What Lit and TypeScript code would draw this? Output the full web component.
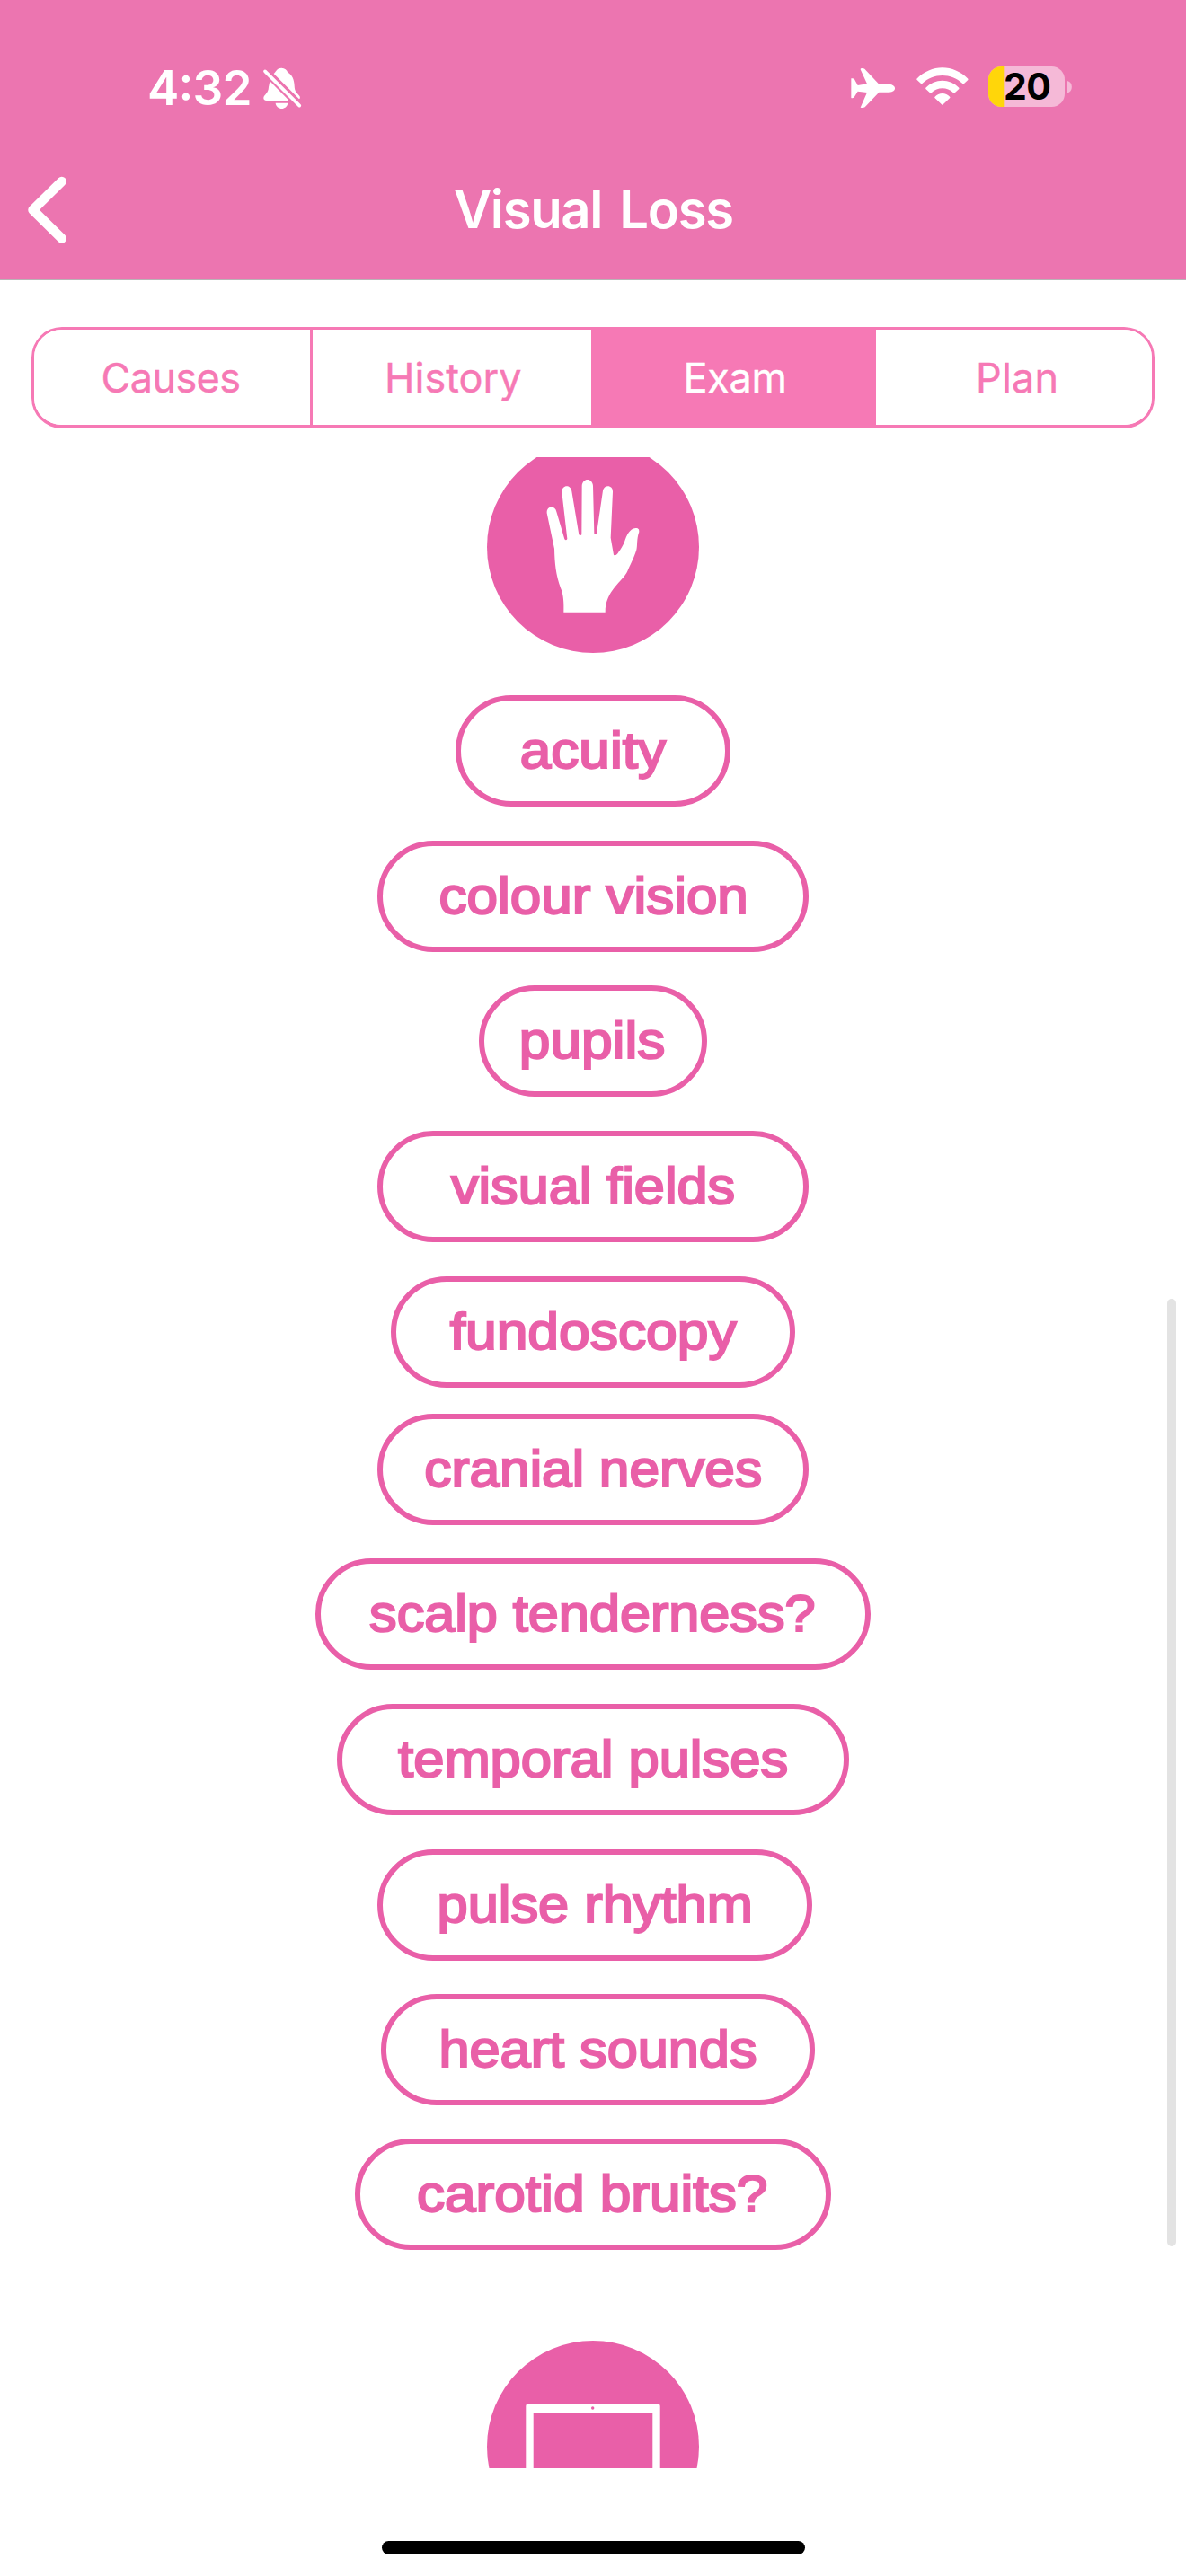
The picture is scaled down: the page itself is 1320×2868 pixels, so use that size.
import { LitElement, html, css, svg } from "lit";
import { customElement, property, state } from "lit/decorators.js";
import { classMap } from "lit/directives/class-map.js";
import { styleMap } from "lit/directives/style-map.js";

interface ExamItem {
  label: string;
  width: number;
  gap: number;
  textX: number;
  textWidth: number;
  shift?: number;
}

const EXAM_ITEMS: ExamItem[] = [
  { label: "acuity", width: 306, gap: 47, textX: 71.8, textWidth: 162.2 },
  { label: "colour vision", width: 480, gap: 38, textX: 68.6, textWidth: 344.2 },
  { label: "pupils", width: 254, gap: 37, textX: 44.8, textWidth: 162.6 },
  { label: "visual fields", width: 480, gap: 38, textX: 81.9, textWidth: 316.2 },
  { label: "fundoscopy", width: 450, gap: 38, textX: 65.7, textWidth: 318.9 },
  { label: "cranial nerves", width: 480, gap: 29, textX: 52.2, textWidth: 375.9 },
  { label: "scalp tenderness?", width: 618, gap: 37, textX: 60.1, textWidth: 496.4 },
  { label: "temporal pulses", width: 570, gap: 38, textX: 68.1, textWidth: 434.1, shift: -1 },
  { label: "pulse rhythm", width: 484, gap: 38, textX: 66.5, textWidth: 351.3, shift: 4 },
  { label: "heart sounds", width: 483, gap: 37, textX: 64.5, textWidth: 354, shift: 11 },
  { label: "carotid bruits?", width: 530, gap: 37, textX: 68.9, textWidth: 390.4 },
];

const TABS = [
  { label: "Causes", width: 307, x: 75, textWidth: 155.5 },
  { label: "History", width: 310, x: 80.5, textWidth: 152.5 },
  { label: "Exam", width: 317, x: 103, textWidth: 115.5 },
  { label: "Plan", width: 307, x: 111.5, textWidth: 92 },
];

@customElement("exam-pill")
export class ExamPill extends LitElement {
  @property({ attribute: false }) item!: ExamItem;

  static styles = css`
    :host {
      display: block;
    }
    .pill {
      box-sizing: border-box;
      height: 124px;
      border: 6px solid #e95fa8;
      border-radius: 62px;
      background: #fff;
    }
    .label {
      display: block;
      overflow: visible;
      font: 57px "Liberation Sans", Arial, sans-serif;
      text-rendering: geometricPrecision;
      fill: #e95fa8;
      stroke: #e95fa8;
      stroke-width: 2.2px;
    }
  `;

  render() {
    const { label, width, textX, textWidth } = this.item;
    return html`
      <div class="pill" style=${styleMap({ width: `${width}px` })}>
        <svg class="label" width=${width - 12} height="112">
          <text x=${textX - 6} y="75" textLength=${textWidth} lengthAdjust="spacingAndGlyphs">${label}</text>
        </svg>
      </div>
    `;
  }
}

@customElement("app-root")
export class AppRoot extends LitElement {
  @state() private active = "Exam";

  static styles = css`
    :host {
      display: flex;
      flex-direction: column;
      width: 1320px;
      height: 2868px;
      overflow: hidden;
      position: relative;
      background: #fff;
      font-family: Inter, "Liberation Sans", sans-serif;
    }
    svg {
      display: block;
      overflow: visible;
      flex: none;
    }
    .header {
      box-sizing: border-box;
      height: 312px;
      flex: none;
      background: #ec75b0;
      border-bottom: 1px solid #b9b3b6;
      color: #fff;
    }
    .status {
      box-sizing: border-box;
      display: flex;
      align-items: flex-start;
      height: 156px;
      padding: 73px 127px 0 164px;
    }
    .time {
      fill: #fff;
      font-size: 53px;
      font-weight: 600;
    }
    .bell {
      margin: 2px 0 0 13px;
    }
    .plane {
      margin: 3px 0 0 auto;
    }
    .wifi {
      margin: 2px 0 0 24px;
    }
    .battery {
      margin: 1px 0 0 22px;
    }
    .level {
      font-size: 41px;
      font-weight: 700;
      fill: #000;
    }
    .nav {
      display: grid;
      grid-template-columns: 504px 312px 1fr;
      height: 155px;
    }
    .back {
      padding: 0;
      border: 0;
      background: none;
      display: flex;
    }
    .title {
      fill: #fff;
      font-size: 58px;
      font-weight: 600;
      word-spacing: 6px;
    }
    .tabs {
      box-sizing: border-box;
      display: flex;
      flex: none;
      width: 1250px;
      height: 113px;
      margin: 52px 35px 32px;
      border: 3px solid #f679b5;
      border-bottom-width: 4px;
      border-radius: 34px;
      overflow: hidden;
    }
    .tab {
      box-sizing: border-box;
      flex: none;
      padding: 0;
      border: 0;
      background: #fff;
      fill: #f679b5;
      stroke: #f679b5;
      stroke-width: 0.4px;
      font: 400 45px Inter, "Liberation Sans", sans-serif;
    }
    .tab.divided {
      border-right: 3px solid #f679b5;
    }
    .tab.active {
      background: #f679b5;
      fill: #fff;
      stroke: #fff;
    }
    .viewport {
      flex: none;
      height: 2239px;
      overflow: hidden;
    }
    .list {
      display: flex;
      flex-direction: column;
      align-items: center;
      margin-top: -18px;
    }
    .next {
      margin-top: 101px;
    }
    .scrollbar {
      position: absolute;
      left: 1299px;
      top: 1446px;
      width: 10px;
      height: 1055px;
      border-radius: 5px;
      background: #e3e3e3;
    }
    .home {
      flex: none;
      width: 471px;
      height: 15px;
      margin: 81px 0 0 425px;
      border-radius: 8px;
      background: #000;
    }
  `;

  private renderStatus() {
    return html`
      <div class="status">
        <svg class="time" width="116" height="50">
          <text x="0" y="44" textLength="116.5">4:32</text>
        </svg>
        <svg class="bell" width="42.3" height="46.3" viewBox="878 104 127 139" fill="#fff">
          <path d="M913 125C921 119 922 107 939 106C950 106 957 113 960 121C975 129 981 145 982 165C983 188 990 187 1000 201Q1003 208 998 210Z" />
          <path d="M900 150L962 213Q962 215 959 215H889Q878 214 879 205C882 193 895 192 896 170Z" />
          <path d="M919 223H960C957 248 922 248 919 223Z" />
          <path d="M884 117L999 232" stroke="#fff" stroke-width="11" stroke-linecap="round" />
        </svg>
        <svg class="plane" width="49.3" height="44" viewBox="140 108 148 132" fill="#fff">
          <path d="M173 109Q180 107 186 110L234 161H268C294 163 294 187 268 188H234L187 238Q180 242 172 239L194 189L163 185L151 205Q146 209 141 207V142Q148 140 152 145L163 165L194 160L172 112Z" />
        </svg>
        <svg class="wifi" width="57.7" height="42" viewBox="359 105 173 126" fill="#fff">
          <path d="M360 143C408 93 483 93 531 143Q532 145 531 147L518 159Q515 161 513 159C475 123 416 123 378 159Q376 161 374 159L361 147Q359 145 360 143Z" />
          <path d="M390 173C420 141 471 141 501 173Q502 175 501 177L487 190Q485 192 482 190C462 170 429 170 409 190Q406 192 404 190L390 177Q389 175 390 173Z" />
          <path d="M420 204C434 188 457 188 471 204Q472 206 470 208L448 229Q445.5 232 443 229L421 208Q419 206 420 204Z" />
        </svg>
        <svg class="battery" width="93" height="45" viewBox="0 0 93 45">
          <defs>
            <clipPath id="body"><rect width="85" height="45" rx="14.5" /></clipPath>
          </defs>
          <g clip-path="url(#body)">
            <rect width="85" height="45" fill="#f5b9d7" />
            <rect width="17.3" height="45" fill="#ffd60a" />
          </g>
          <path d="M88 16C94.500 17.500 94.500 28 88 29.500Z" fill="#f5b9d7" />
          <text class="level" x="17" y="37.200" textLength="53">20</text>
        </svg>
      </div>
    `;
  }

  private renderTab(tab: (typeof TABS)[number], index: number) {
    return html`
      <button
        class=${classMap({ tab: true, divided: index === 0, active: tab.label === this.active })}
        style=${styleMap({ width: `${tab.width + (index === 0 ? 3 : 0)}px` })}
        @click=${() => (this.active = tab.label)}
      >
        <svg width=${tab.width} height="106">
          <text x=${tab.x - 0.5} y="70" textLength=${tab.textWidth}>${tab.label}</text>
        </svg>
      </button>
    `;
  }

  private handIcon = svg`
    <path fill="#fff" d="M381 574C382 545 381 515 371 493C355 450 351 410 350 362L325 243C323 218 352 216 357 238L384 330Q389 336 393 329L375 173C375 147 405 147 408 170L432 315Q437 320 441 315L442 152C444 124 477 124 479 152L483 311Q487 316 491 311L512 168C515 147 546 147 545 172L538 325L548 382Q554 387 562 377C572 362 580 352 586 333C597 302 612 290 628 294Q634 296 633 305C624 330 628 350 624 366C616 392 602 418 594 437C580 470 520 500 520 574Z" />
  `;

  render() {
    return html`
      <header class="header">
        ${this.renderStatus()}
        <div class="nav">
          <button class="back" aria-label="Back">
            <svg width="110" height="155" fill="none" stroke="#fff" stroke-width="10.5" stroke-linecap="round" stroke-linejoin="round">
              <path d="M68.700 46L36.500 77.700L68.700 109.500" />
            </svg>
          </button>
          <svg class="title" width="312" height="155">
            <text x="1" y="98" textLength="312">Visual Loss</text>
          </svg>
        </div>
      </header>
      <nav class="tabs">${TABS.map((tab, i) => this.renderTab(tab, i))}</nav>
      <main class="viewport">
        <div class="list">
          <svg width="236" height="236" viewBox="125 2 708 708">
            <circle cx="479" cy="356" r="354" fill="#e95fa8" />
            ${this.handIcon}
          </svg>
          ${EXAM_ITEMS.map(
            (item) => html`
              <exam-pill
                .item=${item}
                style=${styleMap({ marginTop: `${item.gap}px`, marginLeft: `${item.shift ?? 0}px` })}
              ></exam-pill>
            `,
          )}
          <svg class="next" width="236" height="236" viewBox="0 0 236 236">
            <circle cx="118" cy="118" r="118" fill="#e95fa8" />
            <path fill="#fff" fill-rule="evenodd" d="M43.300 170V73Q43.300 70.300 46 70.300H190Q192.700 70.300 192.700 73V170ZM51.700 80.700V160H184.300V80.700Z" />
            <circle cx="117.700" cy="75" r="1.700" fill="#e95fa8" />
          </svg>
        </div>
      </main>
      <div class="home"></div>
      <div class="scrollbar"></div>
    `;
  }
}
